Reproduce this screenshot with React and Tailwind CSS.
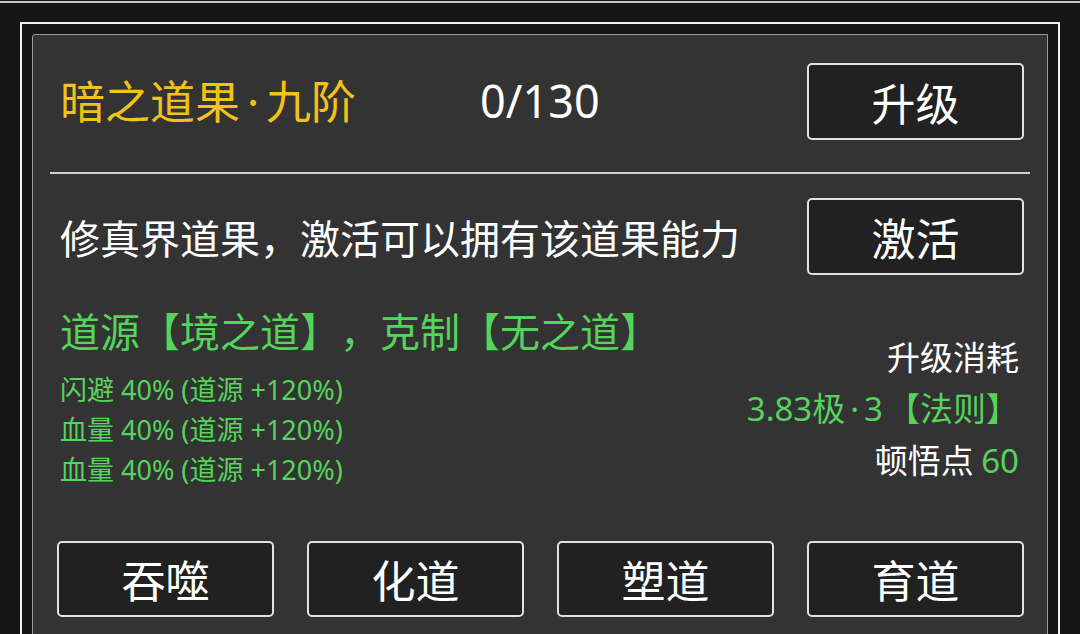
import React from 'react';

const font = { fontFamily: '"Noto Sans", "Noto Sans CJK SC", sans-serif' };

function Btn({ children, h = 'h-[77px]' }) {
  return (
    <div className={`w-[217px] ${h} shrink-0 rounded-[5px] border-2 border-[#e2e2e2] bg-[#212121] flex items-center justify-center text-[44px] leading-none text-white`}>
      {children}
    </div>
  );
}

const stats = ['闪避 40% (道源 +120%)', '血量 40% (道源 +120%)', '血量 40% (道源 +120%)'];

export default function App() {
  return (
    <div
      className="w-[1080px] h-[634px] overflow-hidden bg-[#151515] [text-spacing-trim:space-all]"
      style={{ fontFamily: '"Noto Sans CJK SC", sans-serif' }}
    >
      <div className="pt-[1px]">
        <div className="h-[2px] bg-[#c8c8c8]" />
      </div>

      <div className="ml-[20px] mt-[19px] w-[1040px] h-[640px] border-2 border-[#f0f0f0] p-[10px]">
        <div className="h-full rounded-tl-[3px] border border-[#9a9a9a] bg-[#333333]">
          {/* header row */}
          <div className="flex items-center pl-[27px] pr-[23px] pt-[28px]">
            <div className="w-[420px] pb-[3px] text-[45px] leading-none text-[#f2c21b]">
              暗之道果<span className="px-[7px]" style={font}>·</span>九阶
            </div>
            <div className="flex-1 pb-[3px] text-[45px] leading-none text-white" style={font}>0/130</div>
            <Btn>升级</Btn>
          </div>

          <div className="mx-[17px] mt-[32px] h-[2px] bg-[#d0d0d0]" />

          <div className="flex items-center pl-[27px] pr-[23px] mt-[24px]">
            <div className="flex-1 text-[40px] leading-none text-white">修真界道果，激活可以拥有该道果能力</div>
            <Btn>激活</Btn>
          </div>

          {/* details */}
          <div className="flex justify-between pl-[27px] pr-[28px] mt-[35px] h-[231px]">
            <div>
              <div className="text-[40px] leading-[40px] text-[#55d45c]">道源【境之道】，克制【无之道】</div>
              <div className="mt-[20px] text-[27px] leading-[40px] text-[#55d45c]" style={font}>
                {stats.map((s, i) => (
                  <div key={i}>{s}</div>
                ))}
              </div>
            </div>
            <div className="pt-[21px] text-right text-[33px] leading-[51px] text-white">
              <div>升级消耗</div>
              <div className="text-[#55d45c]">
                <span style={font}>3.83</span>极<span className="px-[5px]" style={font}>·</span>
                <span className="pr-[4px]" style={font}>3</span>【法则】
              </div>
              <div>顿悟点 <span className="text-[#55d45c]" style={font}>60</span></div>
            </div>
          </div>

          <div className="flex gap-[33px] pl-[24px]">
            {['吞噬', '化道', '塑道', '育道'].map((t) => (
              <Btn key={t} h="h-[76px]">{t}</Btn>
            ))}
          </div>
        </div>
      </div>
    </div>
  );
}
